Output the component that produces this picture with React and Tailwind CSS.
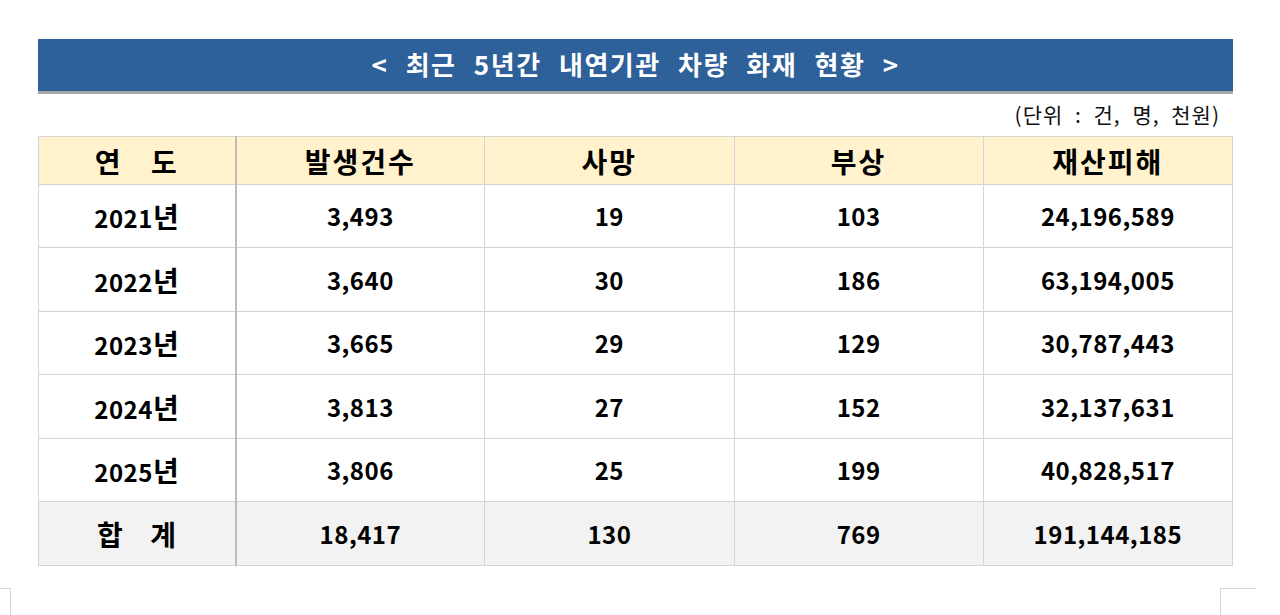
import React from "react"

const rows = [
  ["2021", "3,493", "19", "103", "24,196,589"],
  ["2022", "3,640", "30", "186", "63,194,005"],
  ["2023", "3,665", "29", "129", "30,787,443"],
  ["2024", "3,813", "27", "152", "32,137,631"],
  ["2025", "3,806", "25", "199", "40,828,517"],
]

const heights = ["h-[63px]", "h-[64px]", "h-[63px]", "h-[64px]", "h-[63px]"]

const cell = "border border-[#d4d4d4] text-center"
const firstCell = "border border-[#d4d4d4] border-r-2 border-r-[#bdbdbd] text-center"

export default function App() {
  return (
    <div
      className="relative w-[1280px] h-[615px] bg-white overflow-hidden text-black"
      style={{ fontFamily: '"Noto Sans CJK KR", "Noto Sans", sans-serif' }}
    >
      <div className="pt-[39px] ml-[38px] w-[1195px]">
        <div className="h-[55px] bg-[#2e6099] border-b-[3px] border-[#a8a8a8] flex items-center justify-center">
          <span className="text-white text-[26px] font-bold tracking-[1.5px] [word-spacing:10px] leading-none -mt-[2px]">
            &lt; 최근 5년간 내연기관 차량 화재 현황 &gt;
          </span>
        </div>
        <div className="h-[42px] flex items-center justify-end pr-[13px] text-[21px] tracking-[1px] [word-spacing:6px] text-[#111]">
          (단위 : 건, 명, 천원)
        </div>
        <table className="w-[1195px] border-collapse table-fixed text-[24px] font-bold tracking-[0.5px] leading-none">
          <colgroup>
            <col className="w-[197px]" />
            <col />
            <col />
            <col />
            <col />
          </colgroup>
          <thead>
            <tr className="h-[48px] bg-[#fff2cc] text-[28px] tracking-[2px]">
              <th className={firstCell + " font-bold [word-spacing:20px]"}>연 도</th>
              <th className={cell + " font-bold"}>발생건수</th>
              <th className={cell + " font-bold"}>사망</th>
              <th className={cell + " font-bold"}>부상</th>
              <th className={cell + " font-bold"}>재산피해</th>
            </tr>
          </thead>
          <tbody>
            {rows.map((r, i) => (
              <tr key={r[0]} className={heights[i]}>
                <td className={firstCell}>
                  {r[0]}
                  <span className="text-[28px]">년</span>
                </td>
                <td className={cell}>{r[1]}</td>
                <td className={cell}>{r[2]}</td>
                <td className={cell}>{r[3]}</td>
                <td className={cell}>{r[4]}</td>
              </tr>
            ))}
            <tr className="h-[64px] bg-[#f2f2f2]">
              <td className={firstCell + " text-[28px] [word-spacing:20px]"}>합 계</td>
              <td className={cell}>18,417</td>
              <td className={cell}>130</td>
              <td className={cell}>769</td>
              <td className={cell}>191,144,185</td>
            </tr>
          </tbody>
        </table>
      </div>
      <div className="absolute left-0 top-[588px] w-[11px] h-[30px] border-t border-r border-[#d6d6d6]" />
      <div className="absolute left-[1220px] top-[588px] w-[36px] h-[30px] border-t border-l border-[#d6d6d6]" />
    </div>
  )
}
